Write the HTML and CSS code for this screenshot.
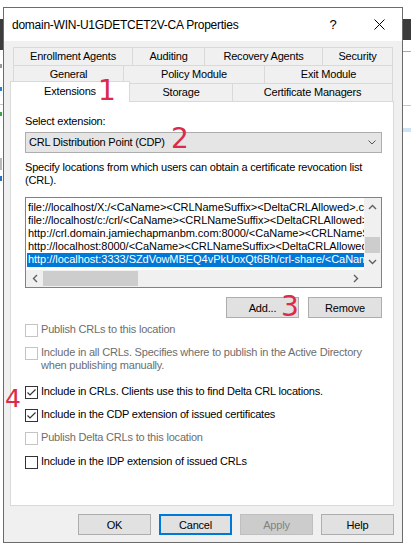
FILE: index.html
```html
<!DOCTYPE html>
<html>
<head>
<meta charset="utf-8">
<title>Properties</title>
<link rel="stylesheet" href="styles.css">
</head>
<body>
<div class="bg bg-dark-left"></div>
<div class="bg bg-line-left"></div>
<div class="bg bg-frag bg-f1"></div>
<div class="bg bg-frag bg-f2"></div>
<div class="bg bg-frag bg-f3"></div>
<div class="bg bg-frag bg-f4"></div>
<div class="bg bg-frag bg-f5"></div>
<div class="bg bg-dark-right"></div>
<div class="bg bg-line-right1"></div>
<div class="bg bg-line-right2"></div>
<div class="bg bg-blue-right"></div>

<div class="dialog">
  <div class="titlebar">
    <span class="title">domain-WIN-U1GDETCET2V-CA Properties</span>
    <span class="tb-btn tb-help">?</span>
    <span class="tb-btn tb-close"><svg width="11" height="11" viewBox="0 0 11 11"><path d="M0.5 0.5L10.5 10.5M10.5 0.5L0.5 10.5" stroke="#000" stroke-width="1" fill="none"/></svg></span>
  </div>
  <div class="body">
    <div class="tabs">
      <div class="tab-row">
        <div class="tab w-enroll">Enrollment Agents</div>
        <div class="tab w-audit">Auditing</div>
        <div class="tab w-recov">Recovery Agents</div>
        <div class="tab w-sec last">Security</div>
      </div>
      <div class="tab-row">
        <div class="tab w-gen">General</div>
        <div class="tab w-policy">Policy Module</div>
        <div class="tab w-exit last">Exit Module</div>
      </div>
      <div class="tab-row">
        <div class="tab sel w-ext">Extensions</div>
        <div class="tab w-stor no-left">Storage</div>
        <div class="tab w-cert last">Certificate Managers</div>
      </div>
    </div>
    <div class="panel">
      <div class="label">Select extension:</div>
      <div class="combo">
        <span>CRL Distribution Point (CDP)</span>
        <svg width="8" height="5" viewBox="0 0 8 5"><path d="M0.5 0.5L4 4L7.5 0.5" fill="none" stroke="#555" stroke-width="1"/></svg>
      </div>
      <p class="desc">Specify locations from which users can obtain a certificate revocation list<br>(CRL).</p>
      <div class="listbox">
        <div class="list-main">
          <div class="list-items">
            <div class="item">file://localhost/X:/&lt;CaName&gt;&lt;CRLNameSuffix&gt;&lt;DeltaCRLAllowed&gt;.crl</div>
            <div class="item">file://localhost/c:/crl/&lt;CaName&gt;&lt;CRLNameSuffix&gt;&lt;DeltaCRLAllowed&gt;.crl</div>
            <div class="item">http://crl.domain.jamiechapmanbm.com:8000/&lt;CaName&gt;&lt;CRLNameSuffix&gt;&lt;DeltaCRLAllowed&gt;.crl</div>
            <div class="item">http://localhost:8000/&lt;CaName&gt;&lt;CRLNameSuffix&gt;&lt;DeltaCRLAllowed&gt;.crl</div>
            <div class="item selected">http://localhost:3333/SZdVowMBEQ4vPkUoxQt6Bh/crl-share/&lt;CaName&gt;&lt;CRLNameSuffix&gt;&lt;DeltaCRLAllowed&gt;.crl</div>
          </div>
          <div class="vscroll">
            <div class="sb-btn"><svg width="9" height="6" viewBox="0 0 9 6"><path d="M1 5L4.5 1.5L8 5" fill="none" stroke="#606060" stroke-width="1.4"/></svg></div>
            <div class="v-track"><div class="v-thumb"></div></div>
            <div class="sb-btn"><svg width="9" height="6" viewBox="0 0 9 6"><path d="M1 1L4.5 4.5L8 1" fill="none" stroke="#606060" stroke-width="1.4"/></svg></div>
          </div>
        </div>
        <div class="hscroll-row">
          <div class="sb-btn"><svg width="6" height="9" viewBox="0 0 6 9"><path d="M5 1L1.5 4.5L5 8" fill="none" stroke="#606060" stroke-width="1.4"/></svg></div>
          <div class="h-track"><div class="h-thumb"></div></div>
          <div class="sb-btn"><svg width="6" height="9" viewBox="0 0 6 9"><path d="M1 1L4.5 4.5L1 8" fill="none" stroke="#606060" stroke-width="1.4"/></svg></div>
          <div class="corner"></div>
        </div>
      </div>
      <div class="btn-row">
        <button class="btn">Add...</button>
        <button class="btn w-remove">Remove</button>
      </div>
      <div class="check disabled c1"><span class="box"></span><span class="ctext">Publish CRLs to this location</span></div>
      <div class="check disabled c2"><span class="box"></span><span class="ctext">Include in all CRLs. Specifies where to publish in the Active Directory<br>when publishing manually.</span></div>
      <div class="check c3"><span class="box"><svg width="11" height="11" viewBox="0 0 11 11"><path d="M1.5 5.5L4 8L9.5 2.5" fill="none" stroke="#333" stroke-width="1.2"/></svg></span><span class="ctext">Include in CRLs. Clients use this to find Delta CRL locations.</span></div>
      <div class="check c4"><span class="box"><svg width="11" height="11" viewBox="0 0 11 11"><path d="M1.5 5.5L4 8L9.5 2.5" fill="none" stroke="#333" stroke-width="1.2"/></svg></span><span class="ctext">Include in the CDP extension of issued certificates</span></div>
      <div class="check disabled c5"><span class="box"></span><span class="ctext">Publish Delta CRLs to this location</span></div>
      <div class="check c6"><span class="box"></span><span class="ctext">Include in the IDP extension of issued CRLs</span></div>
    </div>
    <div class="dlg-buttons">
      <button class="btn">OK</button>
      <button class="btn default">Cancel</button>
      <button class="btn off">Apply</button>
      <button class="btn">Help</button>
    </div>
  </div>
</div>

<div class="note n1">1</div>
<div class="note n2">2</div>
<div class="note n3">3</div>
<div class="note n4">4</div>
</body>
</html>
```

FILE: styles.css
```css
* { box-sizing: border-box; }
html, body { margin: 0; padding: 0; }
body {
  width: 411px;
  height: 544px;
  overflow: hidden;
  position: relative;
  background: #ffffff;
  font-family: "Liberation Sans", Arial, sans-serif;
  font-size: 11px;
  letter-spacing: -0.2px;
  color: #000;
}

/* background desktop fragments */
.bg { position: absolute; }
.bg-dark-left { left: 0; top: 19px; width: 3px; height: 31px; background: #3c3c3c; }
.bg-line-left { left: 0; top: 104px; width: 3px; height: 1px; background: #c8c8c8; }
.bg-frag { width: 2px; left: 0; }
.bg-f1 { top: 64px; height: 4px; background: #9a9a9a; }
.bg-f2 { top: 87px; height: 4px; background: #2f7fd0; }
.bg-f3 { top: 112px; height: 4px; background: #39a64a; }
.bg-f4 { top: 158px; height: 12px; background: #b8b8b8; }
.bg-f5 { top: 176px; height: 5px; background: #2f6fc0; }
.bg-dark-right { left: 403px; top: 19px; width: 8px; height: 21px; background: #3c3c3c; }
.bg-line-right1 { left: 403px; top: 51px; width: 8px; height: 1px; background: #a8a8a8; }
.bg-line-right2 { left: 403px; top: 105px; width: 8px; height: 1px; background: #c8c8c8; }
.bg-blue-right { left: 403px; top: 128px; width: 8px; height: 4px; background: #cfe3f5; }

/* dialog window */
.dialog {
  position: absolute;
  left: 3px;
  top: 7px;
  width: 400px;
  height: 536px;
  border: 1px solid #6b6b6b;
  background: #f0f0f0;
  display: flex;
  flex-direction: column;
  z-index: 1;
}
.titlebar {
  height: 33px;
  flex: none;
  background: #fff;
  display: flex;
  align-items: center;
}
.title {
  flex: 1;
  padding-left: 8px;
  font-size: 12px;
  letter-spacing: -0.25px;
  white-space: nowrap;
}
.tb-btn {
  width: 46px;
  height: 33px;
  display: flex;
  align-items: center;
  justify-content: center;
}
.tb-help { font-size: 13px; letter-spacing: 0; }

.body {
  flex: 1;
  padding: 6px 8px 7px 6px;
  display: flex;
  flex-direction: column;
}

/* tabs */
.tabs { margin-left: 3px; width: 380px; }
.tab-row { display: flex; height: 18px; align-items: flex-start; }
.tab {
  flex: none;
  height: 18px;
  border-top: 1px solid #d9d9d9;
  border-left: 1px solid #d9d9d9;
  background: #f0f0f0;
  text-align: center;
  line-height: 17px;
  white-space: nowrap;
}
.tab.last { border-right: 1px solid #d9d9d9; }
.tab.no-left { border-left: none; }
.tab.sel {
  height: 21px;
  margin-top: -2px;
  margin-bottom: -1px;
  margin-left: -3px;
  background: #fff;
  border-right: 1px solid #d9d9d9;
  line-height: 19px;
  position: relative;
  z-index: 1;
}
.w-enroll { width: 119px; }
.w-audit { width: 72px; }
.w-recov { width: 118px; }
.w-sec { width: 71px; }
.w-gen { width: 110px; }
.w-policy { width: 141px; }
.w-exit { width: 129px; }
.w-ext { width: 120px; }
.w-stor { width: 102px; }
.w-cert { width: 161px; }

/* panel */
.panel {
  flex: none;
  height: 405px;
  background: #fff;
  border: 1px solid #d9d9d9;
  padding: 13px 11px 0 14px;
  display: flex;
  flex-direction: column;
}
.label { line-height: 13px; }
.combo {
  margin-top: 4px;
  height: 21px;
  background: #e5e5e5;
  border: 1px solid #adadad;
  display: flex;
  align-items: center;
  justify-content: space-between;
  padding: 0 5px 0 3px;
  line-height: 13px;
}
.desc { margin: 8px 0 0; line-height: 13px; white-space: nowrap; }

/* listbox */
.listbox {
  margin-top: 10px;
  height: 91px;
  border: 1px solid #828282;
  display: flex;
  flex-direction: column;
  background: #fff;
}
.list-main { flex: 1; display: flex; min-height: 0; }
.list-items {
  flex: 1;
  min-width: 0;
  overflow: hidden;
  padding-top: 3px;
}
.item {
  height: 13px;
  line-height: 13px;
  white-space: nowrap;
  overflow: hidden;
  padding-left: 2px;
  letter-spacing: -0.04px;
}
.item.selected {
  background: #0078d7;
  color: #fff;
  margin-left: 1px;
  padding-left: 1px;
  height: 14px;
}
.vscroll {
  width: 17px;
  flex: none;
  background: #f0f0f0;
  display: flex;
  flex-direction: column;
}
.sb-btn {
  width: 17px;
  height: 17px;
  flex: none;
  display: flex;
  align-items: center;
  justify-content: center;
  background: #f0f0f0;
}
.v-track { flex: 1; display: flex; flex-direction: column; justify-content: flex-end; }
.v-thumb { height: 16px; margin: 0 1px; background: #cdcdcd; }
.hscroll-row { height: 17px; flex: none; display: flex; background: #f0f0f0; }
.h-track { flex: 1; display: flex; }
.h-thumb { width: 95px; margin: 1px 0; background: #cdcdcd; }
.corner { width: 17px; flex: none; background: #f0f0f0; }

/* buttons */
.btn {
  width: 73px;
  height: 21px;
  padding: 0;
  margin: 0;
  background: #e1e1e1;
  border: 1px solid #adadad;
  font-family: inherit;
  font-size: 11px;
  letter-spacing: -0.2px;
  color: #000;
  display: flex;
  align-items: center;
  justify-content: center;
}
.btn.default { border: 2px solid #0078d7; }
.btn.off { background: #cccccc; border-color: #bfbfbf; color: #838383; }
.w-remove { width: 74px; }
.btn-row {
  margin-top: 9px;
  display: flex;
  justify-content: flex-end;
  gap: 9px;
}
.dlg-buttons {
  margin-top: 8px;
  display: flex;
  justify-content: flex-end;
  gap: 8px;
}

/* checkboxes */
.check { display: flex; align-items: flex-start; line-height: 13px; }
.box {
  width: 13px;
  height: 13px;
  flex: none;
  margin-top: 1px;
  margin-right: 3px;
  border: 1px solid #333;
  background: #fff;
  display: flex;
  align-items: center;
  justify-content: center;
}
.check.disabled .box { border-color: #c4c4c4; }
.check.disabled .ctext { color: #6d6d6d; }
.ctext { white-space: nowrap; }
.c1 { margin-top: 5px; }
.c2 { margin-top: 9px; }
.c3 { margin-top: 13px; }
.c4 { margin-top: 9px; }
.c5 { margin-top: 9px; }
.c6 { margin-top: 10px; }

/* red annotations */
.note {
  position: absolute;
  z-index: 5;
  font-family: "DejaVu Sans", sans-serif;
  font-size: 28px;
  line-height: 28px;
  letter-spacing: 0;
  color: #dc2a4a;
}
.n1 { left: 98px; top: 77px; }
.n2 { left: 171px; top: 125px; }
.n3 { left: 281px; top: 293px; }
.n4 { left: 5px; top: 386px; font-size: 25px; line-height: 25px; }
```
